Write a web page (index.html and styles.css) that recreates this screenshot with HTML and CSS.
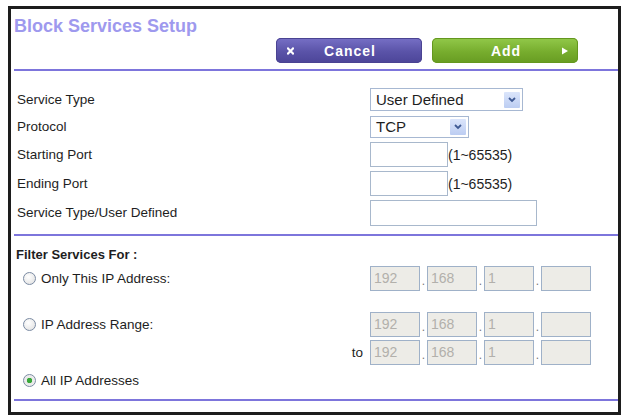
FILE: index.html
```html
<!DOCTYPE html>
<html>

<head>
    <title>Block Services Setup</title>
    <meta charset='utf-8'>
    <link rel="stylesheet" href="styles.css">
</head>

<body>
    <div class='frame'>
        <div class='title'>Block Services Setup</div>

        <div class='actions'>
            <button class='btn btn-cancel'>
                <svg width='7' height='8' viewBox='0 0 7 8'><path d='M1 1.5 L6 6.5 M6 1.5 L1 6.5' stroke='#fff' stroke-width='2.2' stroke-linecap='square'/></svg>
                <span class='btn-text cancel-text'>Cancel</span>
            </button>
            <button class='btn btn-add'>
                <span class='btn-text add-text'>Add</span>
                <svg width='6' height='8' viewBox='0 0 6 8'><polygon points='0,0.5 6,4 0,7.5' fill='#fff'/></svg>
            </button>
        </div>
        <div class='rule'></div>

        <div class='form'>
            <div class='row row-sel'>
                <span class='lbl'>Service Type</span>
                <div class='select sel-wide'>
                    <span class='sel-val'>User Defined</span>
                    <span class='arrow'><svg width='8' height='6' viewBox='0 0 8 6'><path d='M1 1 L4 4 L7 1' stroke='#3f5a94' stroke-width='1.8' fill='none'/></svg></span>
                </div>
            </div>
            <div class='row row-sel'>
                <span class='lbl'>Protocol</span>
                <div class='select sel-narrow'>
                    <span class='sel-val'>TCP</span>
                    <span class='arrow'><svg width='8' height='6' viewBox='0 0 8 6'><path d='M1 1 L4 4 L7 1' stroke='#3f5a94' stroke-width='1.8' fill='none'/></svg></span>
                </div>
            </div>
            <div class='row'>
                <span class='lbl'>Starting Port</span>
                <input type='text' class='port'>
                <span class='hint'>(1~65535)</span>
            </div>
            <div class='row'>
                <span class='lbl'>Ending Port</span>
                <input type='text' class='port'>
                <span class='hint'>(1~65535)</span>
            </div>
            <div class='row'>
                <span class='lbl'>Service Type/User Defined</span>
                <input type='text' class='port port-wide'>
            </div>
        </div>
        <div class='rule rule-mid'></div>

        <div class='filter'>
            <div class='filter-head'>Filter Services For :</div>

            <div class='frow frow-first'>
                <span class='flbl'><span class='radio'></span>Only This IP Address:</span>
                <div class='ip'>
                    <span class='oct'>192</span><span class='dot'>.</span><span class='oct'>168</span><span class='dot'>.</span><span class='oct'>1</span><span class='dot'>.</span><span class='oct'></span>
                </div>
            </div>

            <div class='frow frow-range'>
                <span class='flbl'><span class='radio'></span>IP Address Range:</span>
                <div class='ip'>
                    <span class='oct'>192</span><span class='dot'>.</span><span class='oct'>168</span><span class='dot'>.</span><span class='oct'>1</span><span class='dot'>.</span><span class='oct'></span>
                </div>
            </div>
            <div class='frow frow-to'>
                <span class='flbl to'>to</span>
                <div class='ip'>
                    <span class='oct'>192</span><span class='dot'>.</span><span class='oct'>168</span><span class='dot'>.</span><span class='oct'>1</span><span class='dot'>.</span><span class='oct'></span>
                </div>
            </div>

            <div class='frow frow-all'>
                <span class='flbl'><span class='radio checked'></span>All IP Addresses</span>
            </div>
        </div>
        <div class='rule rule-end'></div>
    </div>
</body>

</html>
```

FILE: styles.css
```css
body {
    margin: 0px;
    padding: 0px;
    background: #fff;
    font-family: "Liberation Sans", Arial, sans-serif;
    color: #1e1e1e
}

.frame {
    margin: 6px 0 0 8px;
    width: 604px;
    height: 403px;
    padding-left: 3px;
    border: 3px solid #1d1d1d;
    background: #fff
}

.title {
    margin-top: 7px;
    font-size: 18px;
    line-height: 20px;
    font-weight: bold;
    color: #9e99ee
}

.actions {
    margin-top: 2px;
    display: flex;
    justify-content: flex-end;
    gap: 10px;
    padding-right: 40px
}

.btn {
    width: 146px;
    height: 25px;
    border: 0px;
    border-radius: 5px;
    padding: 0 10px 0 11px;
    display: flex;
    align-items: center;
    font-family: "Liberation Sans", Arial, sans-serif;
    font-size: 14px;
    font-weight: bold;
    letter-spacing: 1px;
    color: #fff
}

.btn-cancel {
    background: linear-gradient(#7770c6, #5a53a8 55%, #4c4598);
    box-shadow: inset 0 0 0 1px #4a4392
}

.btn-add {
    background: linear-gradient(#92c94a, #77ad2e 55%, #679c22);
    box-shadow: inset 0 0 0 1px #64971f
}

.btn-text {
    flex: 1;
    text-align: center
}

.cancel-text {
    padding-right: 6px
}

.add-text {
    padding-left: 7px
}

.rule {
    margin-top: 6px;
    height: 2px;
    background: #7d75dc
}

.rule-mid {
    margin-top: 7px
}

.rule-end {
    margin-top: 5px
}

.form {
    margin-top: 15px
}

.row {
    height: 29px;
    display: flex;
    align-items: center
}

.row-sel {
    height: 27px
}

.lbl {
    width: 353px;
    padding-left: 3px;
    font-size: 13.5px
}

.select {
    box-sizing: border-box;
    height: 23px;
    border: 1px solid #a7b8d2;
    background: #fff;
    display: flex;
    align-items: center;
    padding-left: 5px;
    padding-right: 2px
}

.sel-wide {
    width: 153px
}

.sel-narrow {
    width: 99px;
    height: 22px
}

.sel-val {
    flex: 1;
    font-size: 15px
}

.arrow {
    width: 16px;
    height: 16px;
    display: flex;
    align-items: center;
    justify-content: center;
    background: linear-gradient(#dbe5fb, #bccdf2);
    border-radius: 1px
}

.port {
    box-sizing: border-box;
    width: 78px;
    height: 25px;
    margin: 0px;
    border: 1px solid #a8b8cc;
    background: #fff
}

.port-wide {
    width: 167px;
    height: 26px
}

.hint {
    font-size: 14px
}

.filter-head {
    margin-top: 11px;
    padding-left: 2px;
    font-size: 13px;
    line-height: 16px;
    font-weight: bold
}

.frow {
    height: 27px;
    display: flex;
    align-items: center
}

.frow-first {
    margin-top: 2px
}

.frow-range {
    margin-top: 19px
}

.frow-to {
    margin-top: 1px
}

.frow-all {
    margin-top: 1px
}

.flbl {
    width: 356px;
    box-sizing: border-box;
    padding-left: 9px;
    display: flex;
    align-items: center;
    gap: 5px;
    font-size: 13.5px
}

.to {
    justify-content: flex-end;
    padding-right: 7px
}

.radio {
    box-sizing: border-box;
    width: 13px;
    height: 13px;
    border: 1px solid #7b8ba3;
    border-radius: 50%;
    background: radial-gradient(circle at 40% 35%, #fff, #dedede)
}

.radio.checked {
    background: radial-gradient(circle, #39a83a 2.5px, #e8e8e8 3px, #f4f4f4)
}

.ip {
    display: flex;
    height: 25px
}

.oct {
    box-sizing: border-box;
    width: 50px;
    height: 25px;
    border: 1px solid #9fb1c8;
    background: #edece7;
    padding: 3px 0 0 3px;
    font-size: 14px;
    color: #b2b0ab
}

.dot {
    width: 7px;
    font-size: 12px;
    line-height: 25px;
    padding-top: 3px;
    text-align: center;
    color: #777
}
```
